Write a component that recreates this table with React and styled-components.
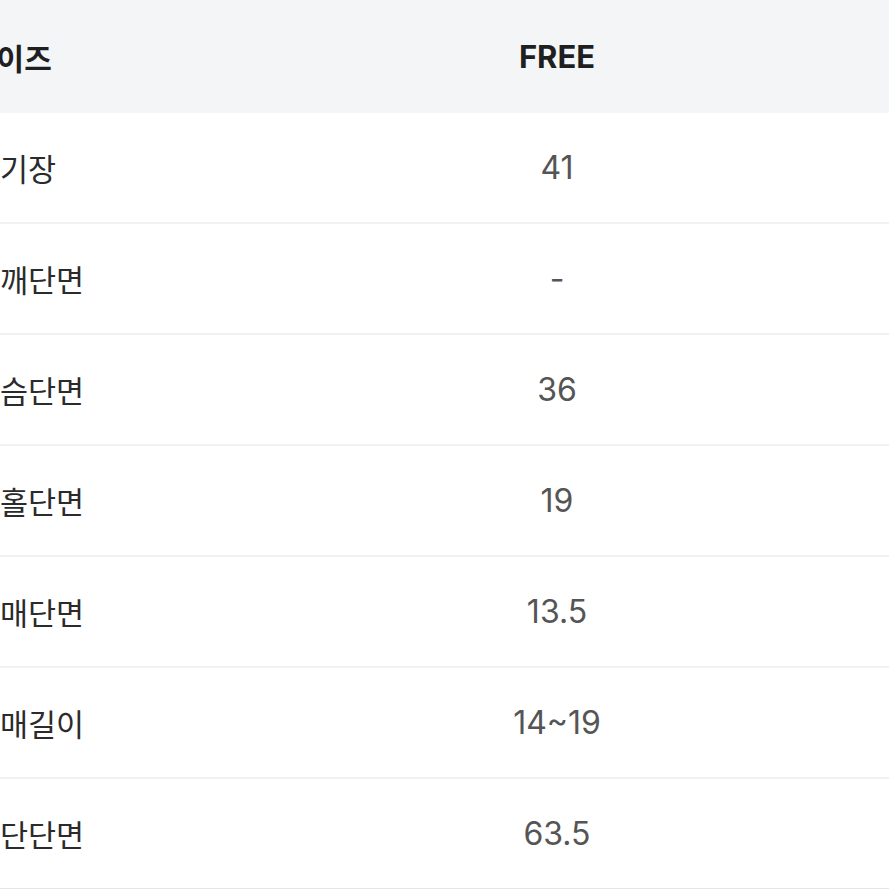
import React from 'react'
import styled, { createGlobalStyle } from 'styled-components'

const GlobalStyle = createGlobalStyle`
  html, body {
    margin: 0;
    padding: 0;
    background: #ffffff;
    overflow: hidden;
  }
  body {
    font-family: Inter, 'Noto Sans CJK KR', sans-serif;
  }
`

const rows = [
  { label: '기장', value: '41' },
  { label: '깨단면', value: '-' },
  { label: '슴단면', value: '36' },
  { label: '홀단면', value: '19' },
  { label: '매단면', value: '13.5' },
  { label: '매길이', value: '14~19' },
  { label: '단단면', value: '63.5' },
]

export default function App() {
  return (
    <>
      <GlobalStyle />
      <SizeTable>
        <HeaderRow>
          <HeadLabel>사이즈</HeadLabel>
          <HeadValue>FREE</HeadValue>
        </HeaderRow>
        {rows.map((row) => (
          <Row key={row.label}>
            <Label>{row.label}</Label>
            <Value>{row.value}</Value>
          </Row>
        ))}
      </SizeTable>
    </>
  )
}

const SizeTable = styled.div`
  width: 889px;
  display: flex;
  flex-direction: column;
`

const HeaderRow = styled.div`
  display: grid;
  grid-template-columns: 225px 1fr;
  align-items: center;
  height: 113px;
  background: #f4f5f7;
`

const Row = styled.div`
  display: grid;
  grid-template-columns: 225px 1fr;
  align-items: center;
  height: 109px;
  border-bottom: 2px solid #f1f1f3;

  &:last-child {
    border-bottom-color: #e6e6e8;
  }
`

const HeadLabel = styled.div`
  margin-left: -31px;
  font-size: 30px;
  font-weight: 700;
  color: #1f1f1f;
`

const HeadValue = styled.div`
  text-align: center;
  font-size: 31px;
  font-weight: 700;
  color: #1f1f1f;
`

const Label = styled.div`
  font-size: 30.5px;
  color: #2b2b2b;
`

const Value = styled.div`
  text-align: center;
  font-size: 32px;
  color: #555555;
`
